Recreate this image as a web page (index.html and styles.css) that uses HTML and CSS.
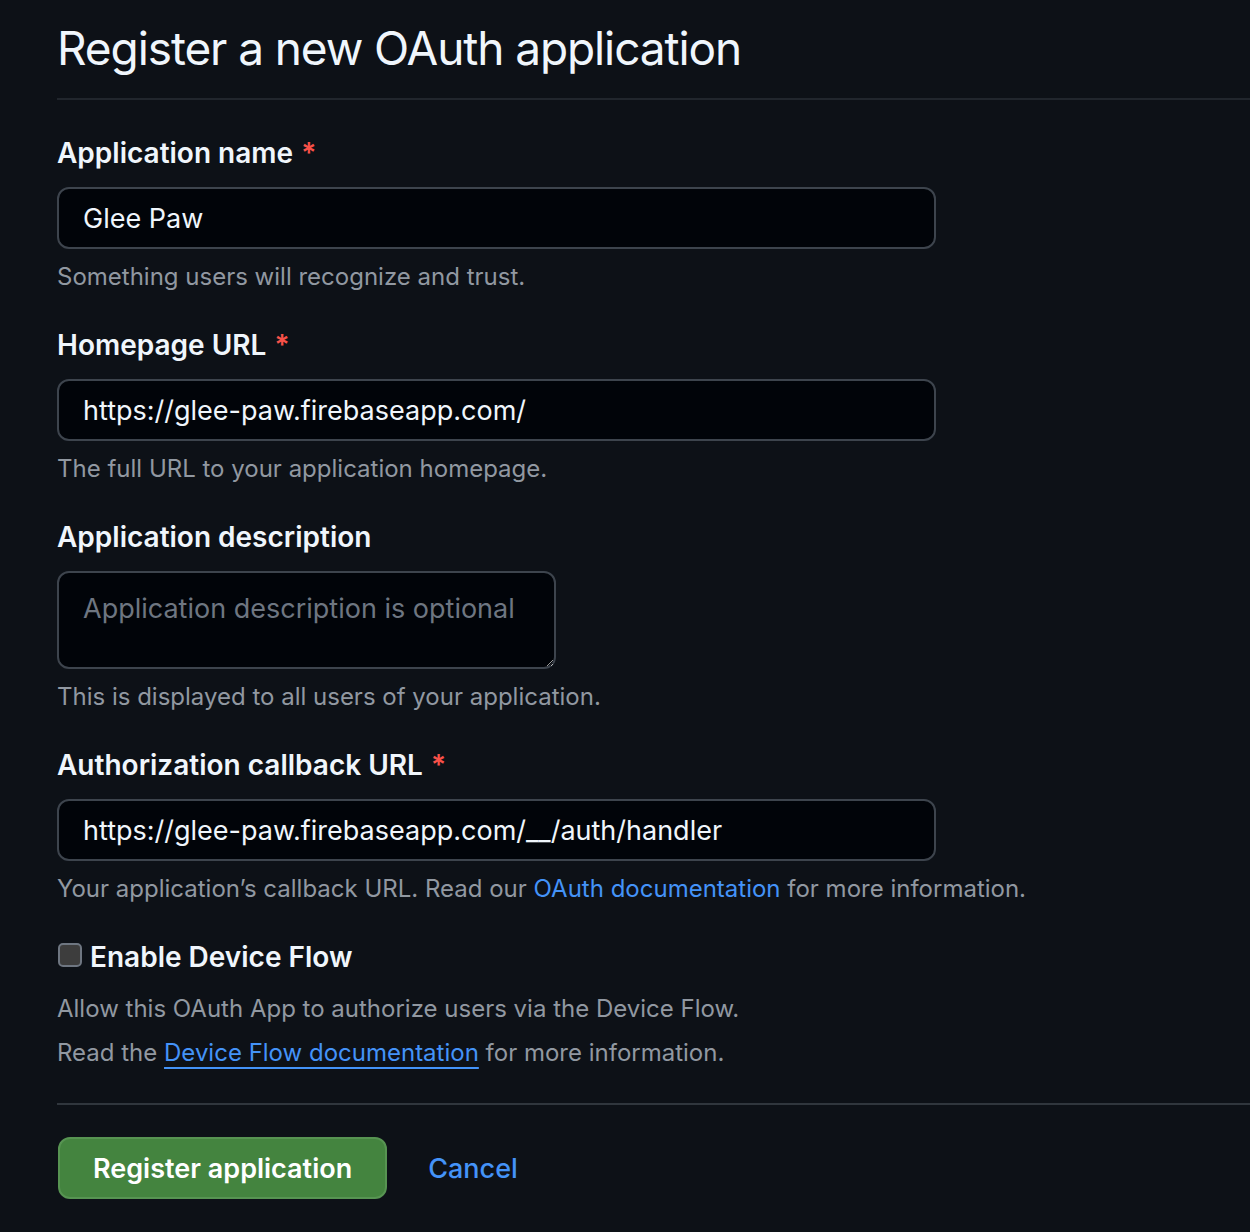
FILE: index.html
```html
<!DOCTYPE html>
<html lang="en">
<head>
<meta charset="utf-8">
<title>Register a new OAuth application</title>
<link rel="stylesheet" href="styles.css">
</head>
<body>
<main class="page">
  <h1 class="title">Register a new OAuth application</h1>
  <form class="form">
    <div class="group">
      <label class="label">Application name <span class="req">*</span></label>
      <input class="input" type="text" value="Glee Paw">
      <p class="note">Something users will recognize and trust.</p>
    </div>
    <div class="group">
      <label class="label">Homepage URL <span class="req">*</span></label>
      <input class="input" type="text" value="https://glee-paw.firebaseapp.com/">
      <p class="note">The full URL to your application homepage.</p>
    </div>
    <div class="group">
      <label class="label">Application description</label>
      <textarea class="textarea" placeholder="Application description is optional"></textarea>
      <p class="note">This is displayed to all users of your application.</p>
    </div>
    <div class="group">
      <label class="label">Authorization callback URL <span class="req">*</span></label>
      <input class="input" type="text" value="https://glee-paw.firebaseapp.com/__/auth/handler">
      <p class="note">Your application’s callback URL. Read our <a class="link" href="#">OAuth documentation</a> for more information.</p>
    </div>
    <div class="group">
      <label class="check-row"><span class="checkbox"></span><span class="label">Enable Device Flow</span></label>
      <p class="note note-first">Allow this OAuth App to authorize users via the Device Flow.</p>
      <p class="note note-second">Read the <a class="link link-underline" href="#">Device Flow documentation</a> for more information.</p>
    </div>
    <div class="actions">
      <button class="btn-primary" type="button">Register application</button>
      <a class="btn-cancel" href="#">Cancel</a>
    </div>
  </form>
</main>
</body>
</html>
```
FILE: styles.css
```css
html, body {
  margin: 0;
  padding: 0;
  background: #0d1117;
  color-scheme: dark;
}
body {
  font-family: Inter, "Noto Sans", sans-serif;
  color: #f0f6fc;
  overflow: hidden;
}
.page {
  padding-left: 57px;
}
.title {
  margin: 0;
  padding-top: 20px;
  font-size: 46px;
  line-height: 56px;
  font-weight: 400;
  letter-spacing: -1.1px;
  color: #f0f6fc;
  padding-bottom: 22px;
  border-bottom: 2px solid #21262d;
}
.form {
  padding-top: 33px;
}
.group {
  margin-bottom: 30px;
}
.label {
  display: block;
  font-size: 28px;
  line-height: 40px;
  font-weight: 600;
  color: #f0f6fc;
  margin-bottom: 14px;
}
.req {
  color: #f85149;
  margin-left: 1px;
}
.input, .textarea {
  display: block;
  box-sizing: border-box;
  width: 879px;
  height: 62px;
  margin: 0;
  padding: 0 24px;
  background: #010409;
  border: 2px solid #3d444d;
  border-radius: 12px;
  color: #f0f6fc;
  font-family: Inter, "Noto Sans", sans-serif;
  font-size: 27px;
  outline: none;
}
.textarea {
  width: 499px;
  height: 98px;
  padding: 16px 24px;
  line-height: 40px;
  resize: vertical;
}
.textarea::placeholder {
  color: #6e7681;
}
.note {
  margin: 10px 0 0;
  font-size: 24px;
  line-height: 36px;
  color: #9198a1;
}
.link {
  color: #4493f8;
  text-decoration: none;
}
.link-underline {
  text-decoration: underline;
  text-decoration-thickness: 2px;
  text-underline-offset: 6px;
}
.check-row {
  display: flex;
  align-items: center;
  gap: 8px;
  height: 40px;
}
.check-row .label {
  margin-bottom: 0;
}
.checkbox {
  box-sizing: border-box;
  width: 24px;
  height: 24px;
  border: 2px solid #6e7681;
  border-radius: 5px;
  background: #3d3d3d;
  margin-top: -4px;
  margin-left: 1px;
}
.note-first {
  margin-top: 14px;
}
.note-second {
  margin-top: 8px;
}
.actions {
  border-top: 2px solid #30363d;
  margin-top: 32px;
  padding-top: 32px;
  display: flex;
  align-items: center;
  gap: 41px;
}
.btn-primary {
  box-sizing: border-box;
  height: 62px;
  margin-left: 1px;
  padding: 0 33px;
  background: #44843f;
  border: 2px solid #579452;
  border-radius: 12px;
  color: #ffffff;
  font-family: Inter, "Noto Sans", sans-serif;
  font-size: 27px;
  font-weight: 600;
}
.btn-cancel {
  color: #4493f8;
  text-decoration: none;
  font-size: 27px;
  font-weight: 500;
}
```
